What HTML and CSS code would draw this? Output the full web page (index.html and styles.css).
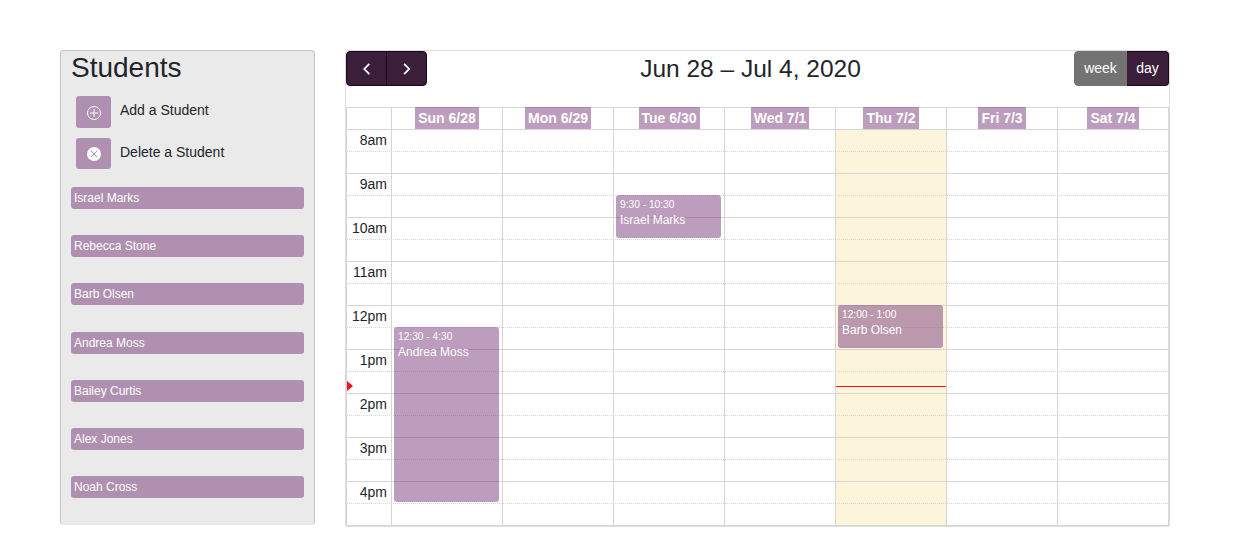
FILE: index.html
```html
<!DOCTYPE html>
<html lang="en">
<head>
<meta charset="utf-8">
<title>Students</title>
<link rel="stylesheet" href="styles.css">
</head>
<body>
<main class="page">
  <aside class="sidebar">
    <h1 class="sidebar-title">Students</h1>
    <div class="action add">
      <button class="icon-button" aria-label="Add"><svg width="16" height="16" viewBox="0 0 16 16" fill="none" stroke="#fff"><circle cx="8" cy="8" r="6.5" stroke-width="1"/><path d="M8 4v8M4 8h8" stroke-width="1"/></svg></button>
      <span>Add a Student</span>
    </div>
    <div class="action delete">
      <button class="icon-button" aria-label="Delete"><svg width="16" height="16" viewBox="0 0 16 16" fill="none"><circle cx="8" cy="8" r="7" fill="#fff"/><path d="M5 5l6 6M11 5l-6 6" stroke="#b090b0" stroke-width="1"/></svg></button>
      <span>Delete a Student</span>
    </div>
    <ul class="students">
      <li>Israel Marks</li>
      <li>Rebecca Stone</li>
      <li>Barb Olsen</li>
      <li>Andrea Moss</li>
      <li>Bailey Curtis</li>
      <li>Alex Jones</li>
      <li>Noah Cross</li>
    </ul>
  </aside>

  <section class="calendar">
    <header class="toolbar">
      <div class="button-group">
        <button class="nav prev" aria-label="Previous"><svg width="14" height="14" viewBox="0 0 14 14"><path d="M9.3 1.8L4.3 7l5 5.2"/></svg></button>
        <button class="nav next" aria-label="Next"><svg width="14" height="14" viewBox="0 0 14 14"><path d="M4.1 1.8l5 5.2-5 5.2"/></svg></button>
      </div>
      <h2 class="range">Jun 28 – Jul 4, 2020</h2>
      <div class="button-group">
        <button class="view week">week</button>
        <button class="view day">day</button>
      </div>
    </header>

    <div class="schedule">
      <div class="day-heads">
        <div class="head"></div>
        <div class="head"><span>Sun 6/28</span></div>
        <div class="head"><span>Mon 6/29</span></div>
        <div class="head"><span>Tue 6/30</span></div>
        <div class="head"><span>Wed 7/1</span></div>
        <div class="head"><span>Thu 7/2</span></div>
        <div class="head"><span>Fri 7/3</span></div>
        <div class="head"><span>Sat 7/4</span></div>
      </div>
      <div class="time-grid">
        <div class="columns">
          <i></i><i></i><i></i><i></i><i></i><i class="today"></i><i></i><i></i>
        </div>
        <div class="slots">
          <div class="slot">8am</div><div class="slot half"></div>
          <div class="slot">9am</div><div class="slot half"></div>
          <div class="slot">10am</div><div class="slot half"></div>
          <div class="slot">11am</div><div class="slot half"></div>
          <div class="slot">12pm</div><div class="slot half"></div>
          <div class="slot">1pm</div><div class="slot half"></div>
          <div class="slot">2pm</div><div class="slot half"></div>
          <div class="slot">3pm</div><div class="slot half"></div>
          <div class="slot">4pm</div><div class="slot half"></div>
        </div>
        <div class="events">
          <article class="event andrea"><time>12:30 - 4:30</time><p>Andrea Moss</p></article>
          <article class="event israel"><time>9:30 - 10:30</time><p>Israel Marks</p></article>
          <article class="event barb"><time>12:00 - 1:00</time><p>Barb Olsen</p></article>
          <div class="now-arrow"></div>
          <div class="now-line"></div>
        </div>
      </div>
    </div>
  </section>
</main>
</body>
</html>
```
FILE: styles.css
```css
* {
  box-sizing: border-box;
}

body {
  margin: 0;
  background: #fff;
  color: #212529;
  font: 14px/21px "Liberation Sans", Arial, sans-serif;
}

h1, h2, p, ul {
  margin: 0;
  padding: 0;
  font-weight: 400;
}

button {
  margin: 0;
  padding: 0;
  font: inherit;
  color: #fff;
}

svg {
  display: block;
}

.page {
  display: flex;
  align-items: flex-start;
  gap: 30px;
  padding: 50px 0 0 60px;
}

/* Student list */
.sidebar {
  width: 255px;
  height: 475px;
  padding: 0 10px;
  background: #eaeaea;
  border: 1px solid #c4c4c4;
  border-bottom: 0;
  border-radius: 4px;
}

.sidebar-title {
  font-size: 28px;
  line-height: 34px;
}

.action {
  display: flex;
  gap: 9px;
  margin-left: 5px;
}

.add {
  margin-top: 11px;
}

.delete {
  margin-top: 10px;
}

.action span {
  margin-top: 4px;
}

.icon-button {
  display: flex;
  width: 35px;
  height: 32px;
  padding: 9px 0 0 10px;
  background: #b090b0;
  border: 0;
  border-radius: 3px;
}

.delete .icon-button {
  height: 31px;
  padding-top: 8px;
}

.students {
  display: grid;
  grid-auto-rows: 22px;
  row-gap: 26.2px;
  margin-top: 18px;
  list-style: none;
}

.students li {
  padding-left: 3px;
  background: #b090b0;
  border-radius: 3px;
  color: #fff;
  font-size: 12px;
  line-height: 22px;
}

/* Calendar */
.calendar {
  width: 825px;
  height: 477px;
  border: 1px solid #dedede;
  border-radius: 3px;
}

.toolbar {
  display: flex;
  justify-content: space-between;
  height: 56px;
}

.range {
  font-size: 24.5px;
  line-height: 35px;
}

.button-group {
  display: flex;
  height: 35px;
}

.nav,
.view {
  background: #3a1e3a;
  border: 1px solid #1f0420;
}

.nav {
  display: flex;
  align-items: center;
  justify-content: center;
  width: 41px;
}

.nav path {
  fill: none;
  stroke: #fff;
  stroke-width: 1.8;
}

.prev {
  border-radius: 4px 0 0 4px;
}

.next {
  margin-left: -1px;
  border-radius: 0 4px 4px 0;
}

.week {
  width: 53px;
  background: #737373;
  border-color: #737373;
  border-radius: 4px 0 0 4px;
}

.day {
  width: 42px;
  border-left: 0;
  border-radius: 0 4px 4px 0;
}

.schedule {
  height: 419px;
  border: 1px solid #d5d5d5;
  border-top: 0;
}

.day-heads,
.columns,
.events {
  display: grid;
  grid-template-columns: 44px repeat(7, 111px);
}

.day-heads {
  height: 22px;
}

.head {
  text-align: center;
  border-top: 1px solid #d5d5d5;
}

.head + .head,
.columns i + i {
  border-left: 1px solid #d5d5d5;
}

.head span {
  display: inline-block;
  height: 22px;
  margin-top: -1px;
  padding: 0 3px;
  background: rgba(122, 60, 124, 0.5);
  color: #fff;
  font-weight: 700;
  line-height: 23px;
}

/* Column fills, time slots and events share one grid cell. */
.time-grid {
  display: grid;
  grid-template: 396px / 821px;
}

.columns,
.slots,
.events {
  grid-area: 1 / 1;
}

.columns .today {
  background: #fcf5dc;
}

.slot {
  height: 22px;
  padding-right: 781px;
  border-top: 1px solid #d5d5d5;
  text-align: right;
  line-height: 20px;
  white-space: nowrap;
}

.slot.half {
  border-top-style: dotted;
}

.events {
  grid-template-rows: repeat(18, 22px);
}

.event {
  margin: 0 3px 1px;
  padding: 2px 4px;
  background: rgba(122, 60, 124, 0.5);
  border-radius: 3px;
  color: #fff;
  font-size: 12px;
  line-height: 16px;
}

.event time {
  display: block;
  font-size: 10.2px;
  line-height: 15px;
}

.andrea {
  grid-area: 10 / 2 / 18 / 3;
}

.israel {
  grid-area: 4 / 4 / 6 / 5;
}

.barb {
  grid-area: 9 / 6 / 11 / 7;
}

.now-arrow {
  grid-area: 12 / 1;
  width: 6px;
  height: 10px;
  margin-top: 10px;
  background: #fc0d1b;
  clip-path: polygon(0 0, 100% 50%, 0 100%);
}

.now-line {
  grid-area: 12 / 6;
  height: 1px;
  margin: 15px 0 0 1px;
  background: #fc0d1b;
}
```
